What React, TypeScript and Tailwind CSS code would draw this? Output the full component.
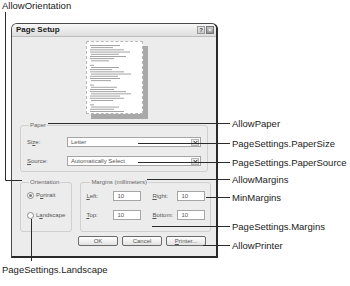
import React from 'react';

const callouts = [
  { text: 'AllowPaper', y: 123 },
  { text: 'PageSettings.PaperSize', y: 143 },
  { text: 'PageSettings.PaperSource', y: 162 },
  { text: 'AllowMargins', y: 179 },
  { text: 'MinMargins', y: 197 },
  { text: 'PageSettings.Margins', y: 226 },
  { text: 'AllowPrinter', y: 245 },
];

const U = ({ children }: { children: React.ReactNode }) => <span className="underline underline-offset-[1px]">{children}</span>;

const Field = ({ value, w }: { value: string; w: string }) => (
  <div className={`h-[10px] ${w} bg-white border border-[#a5a5a5] flex items-center pl-[3px] text-[6px] text-[#555]`}>{value}</div>
);

const Select = ({ value }: { value: string }) => (
  <div className="h-[10px] flex-1 bg-white border border-[#a5a5a5] flex items-center justify-between pl-[3px] pr-[1px] text-[6px] text-[#555]">
    <span>{value}</span>
    <span className="w-[8px] h-[7px] border border-[#b5b5b5] bg-gradient-to-b from-[#f6f6f6] to-[#d8d8d8] flex items-center justify-center">
      <svg width="5" height="4" viewBox="0 0 5 4"><path d="M0.5 0.8 L2.5 3 L4.5 0.8" stroke="#333" strokeWidth="1" fill="none" /></svg>
    </span>
  </div>
);

const Radio = ({ checked, label }: { checked?: boolean; label: React.ReactNode }) => (
  <div className="h-[9px] flex items-center gap-[2px] text-[6px] text-[#555]">
    <span className="w-[7px] h-[7px] rounded-full border border-[#8a8a8a] bg-white flex items-center justify-center">
      {checked && <span className="w-[3px] h-[3px] rounded-full bg-[#777]" />}
    </span>
    <span>{label}</span>
  </div>
);

const Btn = ({ children }: { children: React.ReactNode }) => (
  <div className="w-[40px] h-[10px] rounded-[2px] border border-[#6a6a6a] bg-gradient-to-b from-[#ffffff] to-[#e2e2e2] flex items-center justify-center text-[6px] text-[#555]">{children}</div>
);

// tiny "text" lines of the page preview
const lens = [30, 22, 34, 40, 28, 36, 24, 18, 0, 4, 28, 22, 34, 40, 28, 30, 20, 0, 4, 26, 24, 36, 40, 30, 34, 22, 0, 4, 28, 24, 34];

const PreviewPage = () => (
  <div className="w-[57px] h-[73px] bg-white border border-dashed border-[#b8b8b8] shadow-[5px_5px_0_#a9a9a9]">
    <svg width="55" height="71" viewBox="0 0 55 71">
      {lens.map((l, i) => (l > 0 ? <rect key={i} x={3 + (i % 3 === 1 ? 1 : 0)} y={3 + i * 2.2} width={l} height={0.9} fill="#9a9a9a" /> : null))}
    </svg>
  </div>
);

export default function App() {
  return (
    <div className="relative w-[350px] h-[286px] bg-white overflow-hidden" style={{ fontFamily: '"Liberation Sans", Arial, sans-serif' }}>
      {/* dialog window */}
      <div className="absolute left-[11px] top-[23px] w-[207px] h-[235px] bg-[#ececec] border-t border-l border-[#4a4a4a] border-r-2 border-b-2 border-r-[#2a2a2a] border-b-[#2a2a2a] rounded-t-[6px] flex flex-col">
        <div className="h-[13px] rounded-t-[5px] bg-gradient-to-b from-[#f7f7f7] to-[#dedede] border-b border-[#bdbdbd] flex items-center justify-between pl-[4px] pr-[2px]">
          <span className="text-[8px] font-bold text-[#1a1a1a] leading-none">Page Setup</span>
          <div className="flex gap-[1px]">
            <span className="w-[8px] h-[8px] border border-[#9a9a9a] bg-gradient-to-b from-[#eeeeee] to-[#c8c8c8] flex items-center justify-center text-[6px] font-bold text-[#444] leading-none">?</span>
            <span className="w-[8px] h-[8px] border border-[#777] bg-gradient-to-b from-[#c8c8c8] to-[#8f8f8f] flex items-center justify-center text-[6px] font-bold text-white leading-none">×</span>
          </div>
        </div>
        <div className="flex flex-col px-[8px] pt-[4px]">
          <div className="flex justify-center">
            <PreviewPage />
          </div>
          <fieldset className="mt-[7px] border border-[#d0d0d0] rounded-[3px] px-[6px] pb-[5px] pt-[8px] flex flex-col gap-[9px]">
            <legend className="ml-[2px] px-[1px] text-[6px] text-[#666] leading-[8px]">Paper</legend>
            <div className="flex items-center text-[6px] text-[#555]">
              <span className="w-[40px]">Si<U>z</U>e:</span>
              <Select value="Letter" />
            </div>
            <div className="flex items-center text-[6px] text-[#555]">
              <span className="w-[40px]"><U>S</U>ource:</span>
              <Select value="Automatically Select" />
            </div>
          </fieldset>
          <div className="mt-[6px] flex gap-[8px]">
            <fieldset className="w-[52px] h-[54px] border border-[#d0d0d0] rounded-[3px] px-[6px] pt-[5px] flex flex-col gap-[11px]">
              <legend className="ml-[2px] px-[1px] text-[6px] text-[#666] leading-[8px]">Orientation</legend>
              <Radio checked label={<>P<U>o</U>rtrait</>} />
              <Radio label={<>L<U>a</U>ndscape</>} />
            </fieldset>
            <fieldset className="flex-1 h-[54px] border border-[#d0d0d0] rounded-[3px] pl-[5px] pr-[5px] pt-[5px] flex flex-col gap-[9px]">
              <legend className="ml-[4px] px-[1px] text-[6px] text-[#666] leading-[8px]">Margins (millimeters)</legend>
              <div className="flex items-center text-[6px] text-[#555]">
                <span className="w-[27px]"><U>L</U>eft:</span>
                <Field value="10" w="w-[28px]" />
                <span className="w-[25px] ml-[11px]"><U>R</U>ight:</span>
                <Field value="10" w="w-[28px]" />
              </div>
              <div className="flex items-center text-[6px] text-[#555]">
                <span className="w-[27px]"><U>T</U>op:</span>
                <Field value="10" w="w-[28px]" />
                <span className="w-[25px] ml-[11px]"><U>B</U>ottom:</span>
                <Field value="10" w="w-[28px]" />
              </div>
            </fieldset>
          </div>
          <div className="mt-[4px] flex justify-end gap-[4px] pr-[2px]">
            <Btn>OK</Btn>
            <Btn>Cancel</Btn>
            <Btn><U>P</U>rinter...</Btn>
          </div>
        </div>
      </div>

      {/* leader lines */}
      <svg className="absolute left-0 top-0" width="350" height="286" viewBox="0 0 350 286">
        <g stroke="#2b2b2b" strokeWidth="1" fill="none">
          <path d="M5.5 12 V180.5 H22" />
          <path d="M48 123.5 H230" />
          <path d="M138 143.5 H230" />
          <path d="M138 162.5 H230" />
          <path d="M147 179.5 H230" />
          <path d="M206 197.5 H230" />
          <path d="M152 226.5 H230" />
          <path d="M203 245.5 H230" />
          <path d="M31.5 219 V261" />
        </g>
      </svg>

      {/* labels */}
      <div className="absolute left-[2px] top-0 text-[9.5px] leading-[11px] text-[#222]">AllowOrientation</div>
      <div className="absolute left-[2px] top-[264px] text-[9.5px] leading-[11px] text-[#222]">PageSettings.Landscape</div>
      {callouts.map((c) => (
        <div key={c.text} className="absolute left-[232px] text-[9.5px] leading-[11px] text-[#222]" style={{ top: c.y - 5.5 }}>
          {c.text}
        </div>
      ))}
    </div>
  );
}
